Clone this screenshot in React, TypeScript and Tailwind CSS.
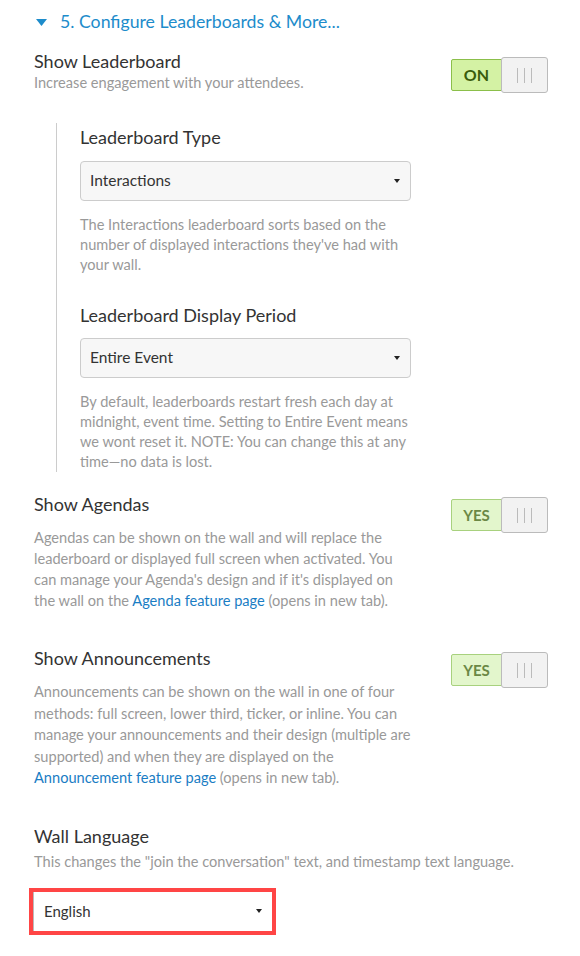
import React from "react";

function Caret() {
  return <span className="inline-block w-0 h-0 border-l-[3px] border-r-[3px] border-t-[4px] border-l-transparent border-r-transparent border-t-[#222]" />;
}

function Toggle({ label, on }: { label: string; on?: boolean }) {
  return (
    <div className="flex items-center">
      <div
        className={
          on
            ? "h-[32px] w-[51px] flex items-center justify-center rounded-l-[2px] border border-[#8bbf4a] bg-[#d4f2a4] text-[16px] font-bold text-[#3a5c0c]"
            : "h-[32px] w-[51px] flex items-center justify-center rounded-l-[2px] border border-[#a8d17e] bg-[#e3f6cc] text-[15px] font-bold text-[#6b8845]"
        }
      >
        {label}
      </div>
      <div className="-ml-px h-[36px] w-[47px] flex items-center justify-center gap-[6px] rounded-[3px] border border-[#bbb] bg-[#f2f2f2]">
        <span className="h-[15px] w-px bg-[#bbb]" />
        <span className="h-[15px] w-px bg-[#bbb]" />
        <span className="h-[15px] w-px bg-[#bbb]" />
      </div>
    </div>
  );
}

function Select({ value }: { value: string }) {
  return (
    <div className="h-[40px] w-[331px] flex items-center justify-between rounded-[4px] border border-[#ccc] bg-[#f7f7f7] pl-[9px] pr-[10px] text-[15.5px] text-[#333]">
      <span>{value}</span>
      <Caret />
    </div>
  );
}

export default function App() {
  return (
    <div
      className="w-[580px] h-[956px] bg-white overflow-hidden"
      style={{ fontFamily: "Lato, 'Open Sans', sans-serif" }}
    >
      {/* Header */}
      <div className="pt-[10px] pl-[36px] flex items-center h-[34px]">
        <svg width="11" height="7" viewBox="0 0 11 7" className="mr-[13px]">
          <polygon points="0,0 11,0 5.5,7" fill="#1d8ccb" />
        </svg>
        <span className="text-[17.7px] leading-[24px] text-[#1d8ccb]">5. Configure Leaderboards &amp; More...</span>
      </div>

      <div className="pl-[34px] pr-[32px]">
        {/* Show Leaderboard */}
        <div className="mt-[15px] flex justify-between">
          <div>
            <div className="text-[18px] leading-[24px] text-[#333]">Show Leaderboard</div>
            <div className="text-[14.6px] leading-[20px] text-[#999]">Increase engagement with your attendees.</div>
          </div>
          <div className="mt-[8px]">
            <Toggle label="ON" on />
          </div>
        </div>

        {/* Indented block */}
        <div className="mt-[30px] ml-[22px] border-l border-[#ccc] pl-[23px] pt-[2px]">
          <div className="text-[18px] leading-[24px] text-[#333]">Leaderboard Type</div>
          <div className="mt-[12px]">
            <Select value="Interactions" />
          </div>
          <div className="mt-[14px] w-[360px] text-[14.6px] leading-[20px] text-[#999]">
            The Interactions leaderboard sorts based on the
            <br />
            number of displayed interactions they've had with
            <br />
            your wall.
          </div>
          <div className="mt-[28px] text-[18px] leading-[24px] text-[#333]">Leaderboard Display Period</div>
          <div className="mt-[11px]">
            <Select value="Entire Event" />
          </div>
          <div className="mt-[14px] w-[360px] text-[14.6px] leading-[20px] text-[#999]">
            By default, leaderboards restart fresh each day at
            <br />
            midnight, event time. Setting to Entire Event means
            <br />
            we wont reset it. NOTE: You can change this at any
            <br />
            time—no data is lost.
          </div>
        </div>

        {/* Show Agendas */}
        <div className="mt-[20px] flex justify-between">
          <div>
            <div className="text-[18px] leading-[24px] text-[#333]">Show Agendas</div>
            <div className="mt-[11px] w-[400px] text-[14.6px] leading-[21px] text-[#999]">
              Agendas can be shown on the wall and will replace the
              <br />
              leaderboard or displayed full screen when activated. You
              <br />
              can manage your Agenda's design and if it's displayed on
              <br />
              the wall on the <span className="text-[#1a7dc4]">Agenda feature page</span> (opens in new tab).
            </div>
          </div>
          <div className="mt-[5px]">
            <Toggle label="YES" />
          </div>
        </div>

        {/* Show Announcements */}
        <div className="mt-[35px] flex justify-between">
          <div>
            <div className="text-[18px] leading-[24px] text-[#333]">Show Announcements</div>
            <div className="mt-[11px] w-[400px] text-[14.6px] leading-[21.5px] text-[#999]">
              Announcements can be shown on the wall in one of four
              <br />
              methods: full screen, lower third, ticker, or inline. You can
              <br />
              manage your announcements and their design (multiple are
              <br />
              supported) and when they are displayed on the
              <br />
              <span className="text-[#1a7dc4]">Announcement feature page</span> (opens in new tab).
            </div>
          </div>
          <div className="mt-[6px]">
            <Toggle label="YES" />
          </div>
        </div>

        {/* Wall Language */}
        <div className="mt-[35px]">
          <div className="text-[18px] leading-[24px] text-[#333]">Wall Language</div>
          <div className="mt-[3px] text-[14.6px] leading-[21px] text-[#999]">
            This changes the "join the conversation" text, and timestamp text language.
          </div>
          <div className="mt-[16px] -ml-[5px] w-[247px] h-[47px] border-4 border-[#ff4545]">
            <div className="h-full flex items-center justify-between border-l border-[#bbb] bg-white pl-[10px] pr-[10px] text-[15px] text-[#333]">
              <span>English</span>
              <Caret />
            </div>
          </div>
        </div>
      </div>
    </div>
  );
}
